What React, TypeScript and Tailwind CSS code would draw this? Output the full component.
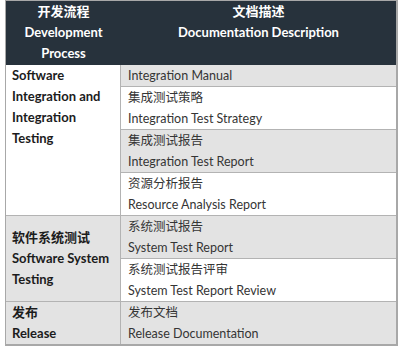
type Doc = { cn?: string; en: string; gray: boolean }

const groups: { label: string[]; gray: boolean; middle?: boolean; docs: Doc[] }[] = [
  {
    label: ['Software', 'Integration and', 'Integration', 'Testing'],
    gray: false,
    docs: [
      { en: 'Integration Manual', gray: true },
      { cn: '集成测试策略', en: 'Integration Test Strategy', gray: false },
      { cn: '集成测试报告', en: 'Integration Test Report', gray: true },
      { cn: '资源分析报告', en: 'Resource Analysis Report', gray: false },
    ],
  },
  {
    label: ['软件系统测试', 'Software System', 'Testing'],
    gray: true,
    middle: true,
    docs: [
      { cn: '系统测试报告', en: 'System Test Report', gray: true },
      { cn: '系统测试报告评审', en: 'System Test Report Review', gray: false },
    ],
  },
  {
    label: ['发布', 'Release'],
    gray: true,
    docs: [{ cn: '发布文档', en: 'Release Documentation', gray: true }],
  },
]

export default function App() {
  return (
    <div className="h-[350px] bg-white pl-[5px] font-[Lato,'Noto_Sans_CJK_SC',sans-serif] leading-[21px]">
      <div className="w-[393px] border-t border-l border-r-2 border-b-2 border-[#a8a8a8]">
        <div className="flex bg-[#27323c] text-[13px] font-bold text-white text-center">
          <div className="w-[115px] pb-px">
            <div>开发流程</div>
            <div>Development</div>
            <div>Process</div>
          </div>
          <div className="flex-1">
            <div>文档描述</div>
            <div>Documentation Description</div>
          </div>
        </div>

        {groups.map((g, gi) => (
          <div key={gi} className={`flex ${gi > 0 ? 'border-t border-[#b3b3b3]' : ''}`}>
            <div
              className={`w-[115px] shrink-0 border-r border-[#b3b3b3] pl-[6px] pr-1 text-[13px] font-bold text-[#1c1c1c] flex flex-col ${
                g.middle ? 'justify-center' : 'justify-start'
              } ${g.gray ? 'bg-[#e3e3e3]' : 'bg-white'}`}
            >
              {g.label.map((l) => (
                <div key={l}>{l}</div>
              ))}
            </div>
            <div className="flex-1 flex flex-col">
              {g.docs.map((d, di) => (
                <div
                  key={d.en}
                  className={`pl-[7px] text-[12.5px] text-[#353535] ${
                    di > 0 ? 'border-t border-[#b3b3b3]' : ''
                  } ${d.gray ? 'bg-[#e3e3e3]' : 'bg-white'}`}
                >
                  {d.cn && <div>{d.cn}</div>}
                  <div>{d.en}</div>
                </div>
              ))}
            </div>
          </div>
        ))}
      </div>
    </div>
  )
}
